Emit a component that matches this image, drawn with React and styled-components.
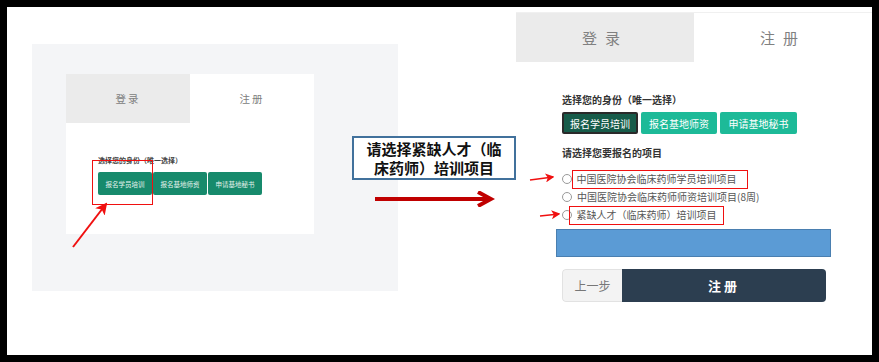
import styled, { createGlobalStyle } from "styled-components";

const GlobalStyle = createGlobalStyle`
  body {
    margin: 0;
    font-family: "Noto Sans CJK SC", "Liberation Sans", sans-serif;
  }
`;

const Frame = styled.div`
  width: 879px;
  height: 362px;
  box-sizing: border-box;
  padding: 7px;
  background: #000;
`;

const Sheet = styled.div`
  display: flex;
  align-items: flex-start;
  width: 100%;
  height: 100%;
  background: #fff;
  overflow: hidden;
`;

/* ---------- left screenshot ---------- */

const LeftPanel = styled.section`
  flex: none;
  margin: 37px 0 0 25px;
  width: 366px;
  height: 247px;
  box-sizing: border-box;
  padding: 30px 0 0 34px;
  background: #f4f5f7;
  position: relative;
`;

const SmallCard = styled.div`
  width: 248px;
  height: 160px;
  background: #fff;
  position: relative;
`;

const Tabs = styled.div`
  display: flex;
  height: ${(p) => p.$h}px;
`;

const Tab = styled.div`
  flex: 1;
  display: flex;
  align-items: center;
  justify-content: center;
  background: ${(p) => (p.$active ? "#fff" : "#ebebeb")};
  color: #808080;
  font-size: ${(p) => p.$size}px;
  letter-spacing: ${(p) => p.$spacing}px;
`;

const SmallBody = styled.div`
  padding: 33px 0 0 32px;
`;

const SmallLabel = styled.div`
  font-size: 7px;
  line-height: 9px;
  font-weight: 700;
  color: #444;
  margin-bottom: 7px;
`;

const SmallButtons = styled.div`
  display: flex;
  gap: 1px;
`;

const SmallButton = styled.div`
  width: 54px;
  height: 23px;
  display: flex;
  align-items: center;
  justify-content: center;
  background: #178a6c;
  border-radius: 2px;
  color: #e6f3ee;
  font-size: 6.5px;
`;

const Highlight = styled.div`
  position: absolute;
  left: ${(p) => p.$x}px;
  top: ${(p) => p.$y}px;
  width: ${(p) => p.$w}px;
  height: ${(p) => p.$h}px;
  border: 1.5px solid #f01010;
  box-sizing: border-box;
`;

const Overlay = styled.svg`
  position: absolute;
  left: ${(p) => p.$x}px;
  top: ${(p) => p.$y}px;
  overflow: visible;
`;

/* ---------- middle annotation ---------- */

const Middle = styled.div`
  flex: none;
  width: 164px;
  margin: 129px 0 0 -46px;
  position: relative;
  z-index: 1;
  display: flex;
  flex-direction: column;
  align-items: flex-start;
`;

const NoteBox = styled.div`
  width: 164px;
  height: 44px;
  box-sizing: border-box;
  border: 2px solid #41719c;
  background: #fff;
  display: flex;
  flex-direction: column;
  align-items: center;
  justify-content: center;
  text-align: center;
  font-size: 15px;
  font-weight: 700;
  color: #111;
`;

const NoteLine = styled.span`
  display: block;
  line-height: 19px;
  height: 19px;
`;

const BigArrow = styled.svg`
  margin: 11px 0 0 23px;
  display: block;
`;

/* ---------- right screenshot ---------- */

const RightPanel = styled.section`
  flex: none;
  width: 356px;
  margin-top: 5px;
  border-top: 1px solid #f0f0f0;
`;

const Form = styled.div`
  padding: 31px 0 0 46px;
  width: 270px;
`;

const Label = styled.div`
  font-size: 10px;
  line-height: 14px;
  font-weight: 700;
  color: #333;
  margin-bottom: ${(p) => p.$mb}px;
`;

const RoleRow = styled.div`
  display: flex;
  gap: 3px;
  margin-bottom: 12px;
`;

const RoleButton = styled.div`
  width: ${(p) => p.$w}px;
  height: 22px;
  box-sizing: border-box;
  display: flex;
  align-items: center;
  justify-content: center;
  border-radius: 2px;
  font-size: 10px;
  color: #fff;
  background: ${(p) => (p.$selected ? "#175c4a" : "#1dba98")};
  border: ${(p) => (p.$selected ? "2px solid #2a2a2a" : "none")};
`;

const Options = styled.div`
  display: flex;
  flex-direction: column;
  margin: 10px 0 5px;
`;

const OptionRow = styled.div`
  position: relative;
  display: flex;
  align-items: center;
  height: 18px;
`;

const Radio = styled.span`
  flex: none;
  width: 10px;
  height: 10px;
  box-sizing: border-box;
  border: 1px solid #9a9a9a;
  border-radius: 50%;
  background: #fff;
  margin-right: 5px;
`;

const OptionText = styled.span`
  font-size: 10px;
  color: #555;
  white-space: nowrap;
  line-height: 16px;
  box-sizing: border-box;
  ${(p) =>
    p.$marked &&
    `
    border: 1.5px solid #f01010;
    padding: 0 ${p.$pr}px 0 ${p.$pl}px;
    margin-left: ${p.$ml}px;
    height: 19px;
    display: inline-flex;
    align-items: center;
  `}
`;

const SideArrow = styled.svg`
  position: absolute;
  left: ${(p) => p.$x}px;
  top: 4px;
  overflow: visible;
`;

const BlueBar = styled.div`
  width: 275px;
  height: 28px;
  margin-left: -6px;
  box-sizing: border-box;
  background: #5b9bd5;
  border: 1px solid #4a7fb0;
  margin-bottom: 12px;
`;

const Actions = styled.div`
  display: flex;
  width: 264px;
  height: 33px;
  border-radius: 4px;
  overflow: hidden;
`;

const BackButton = styled.div`
  width: 60px;
  box-sizing: border-box;
  border: 1px solid #e2e2e2;
  border-right: none;
  border-radius: 4px 0 0 4px;
  background: #f3f3f3;
  color: #777;
  font-size: 12px;
  display: flex;
  align-items: center;
  justify-content: center;
`;

const SubmitButton = styled.div`
  flex: 1;
  background: #2c3e50;
  color: #fff;
  font-size: 13px;
  font-weight: 700;
  letter-spacing: 3px;
  display: flex;
  align-items: center;
  justify-content: center;
`;

const Arrowhead = ({ id, color }) => (
  <defs>
    <marker id={id} markerWidth="6" markerHeight="6" refX="5" refY="3" orient="auto" markerUnits="strokeWidth">
      <path d="M0,0 L6,3 L0,6 L1.5,3 Z" fill={color} />
    </marker>
  </defs>
);

export default function App() {
  return (
    <>
      <GlobalStyle />
      <Frame>
        <Sheet>
          <LeftPanel>
            <SmallCard>
              <Tabs $h={49}>
                <Tab $size={10.5} $spacing={2}>登录</Tab>
                <Tab $active $size={10.5} $spacing={2}>注册</Tab>
              </Tabs>
              <SmallBody>
                <SmallLabel>选择您的身份（唯一选择）</SmallLabel>
                <SmallButtons>
                  <SmallButton>报名学员培训</SmallButton>
                  <SmallButton>报名基地师资</SmallButton>
                  <SmallButton>申请基地秘书</SmallButton>
                </SmallButtons>
              </SmallBody>
              <Highlight $x={26} $y={86} $w={61} $h={45} />
            </SmallCard>
            <Overlay $x={40} $y={158} width="40" height="48">
              <Arrowhead id="diag" color="#f01010" />
              <line x1="1" y1="45" x2="34" y2="2" stroke="#f01010" strokeWidth="2" markerEnd="url(#diag)" />
            </Overlay>
          </LeftPanel>

          <Middle>
            <NoteBox>
              <NoteLine>请选择紧缺人才（临</NoteLine>
              <NoteLine>床药师）培训项目</NoteLine>
            </NoteBox>
            <BigArrow width="120" height="16" viewBox="0 0 120 16">
              <line x1="0" y1="8" x2="115" y2="8" stroke="#c00000" strokeWidth="4" />
              <path d="M103 1 L116 8 L103 15" fill="none" stroke="#c00000" strokeWidth="4" />
            </BigArrow>
          </Middle>

          <RightPanel>
            <Tabs $h={49}>
              <Tab $size={15} $spacing={8}>登录</Tab>
              <Tab $active $size={15} $spacing={8}>注册</Tab>
            </Tabs>
            <Form>
              <Label $mb={5}>选择您的身份（唯一选择）</Label>
              <RoleRow>
                <RoleButton $selected $w={76}>报名学员培训</RoleButton>
                <RoleButton $w={76}>报名基地师资</RoleButton>
                <RoleButton $w={77}>申请基地秘书</RoleButton>
              </RoleRow>
              <Label $mb={0}>请选择您要报名的项目</Label>
              <Options>
                <OptionRow>
                  <SideArrow $x={-32} width="26" height="10">
                    <Arrowhead id="a1" color="#f01010" />
                    <line x1="0" y1="6" x2="23" y2="3" stroke="#f01010" strokeWidth="1.5" markerEnd="url(#a1)" />
                  </SideArrow>
                  <Radio />
                  <OptionText $marked $pl={3.5} $pr={10.5} $ml={-5}>中国医院协会临床药师学员培训项目</OptionText>
                </OptionRow>
                <OptionRow>
                  <Radio />
                  <OptionText>中国医院协会临床药师师资培训项目(8周)</OptionText>
                </OptionRow>
                <OptionRow>
                  <SideArrow $x={-22} width="22" height="10">
                    <Arrowhead id="a2" color="#f01010" />
                    <line x1="0" y1="6" x2="19" y2="4" stroke="#f01010" strokeWidth="1.5" markerEnd="url(#a2)" />
                  </SideArrow>
                  <Radio />
                  <OptionText $marked $pl={6.5} $pr={6.5} $ml={-8}>紧缺人才（临床药师）培训项目</OptionText>
                </OptionRow>
              </Options>
              <BlueBar />
              <Actions>
                <BackButton>上一步</BackButton>
                <SubmitButton>注册</SubmitButton>
              </Actions>
            </Form>
          </RightPanel>
        </Sheet>
      </Frame>
    </>
  );
}
